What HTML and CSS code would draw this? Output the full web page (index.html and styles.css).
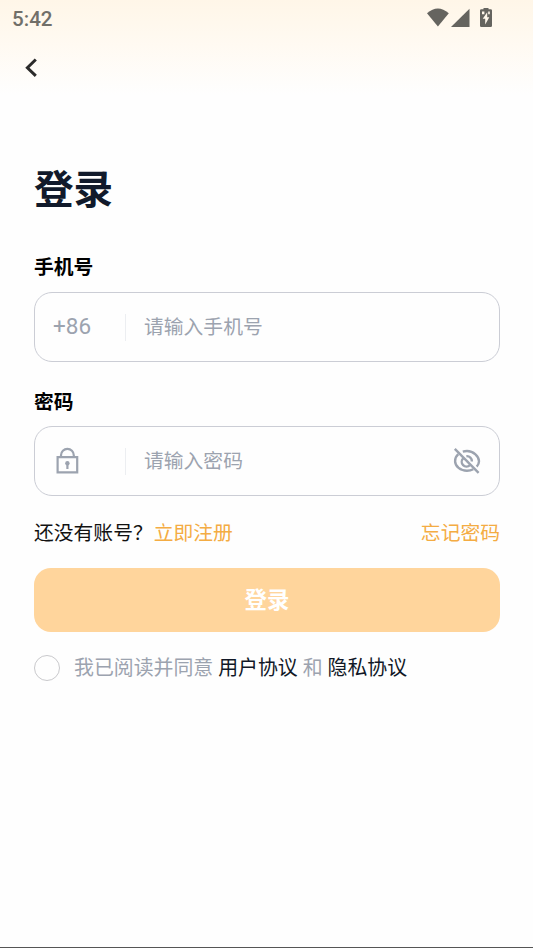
FILE: index.html
```html
<!DOCTYPE html>
<html lang="zh-CN">
<head>
<meta charset="utf-8">
<meta name="viewport" content="width=device-width, initial-scale=1">
<title>登录</title>
<link rel="stylesheet" href="styles.css">
</head>
<body>
<div class="screen">
  <div class="status">
    <span class="clock">5:42</span>
    <svg class="status-icons" width="68" height="22" viewBox="0 0 68 22" fill="#65645f">
      <path d="M1 5.3Q11.8-4.2 22.8 5.3L11.9 18.5Z"/>
      <path d="M43.5 0.8V19H25Z"/>
      <path fill-rule="evenodd" d="M57.5-.5h5v1.8h2.2q1.3 0 1.3 1.3v15.1q0 1.3-1.3 1.3h-9.4q-1.3 0-1.3-1.3V2.6q0-1.3 1.3-1.3h2.2ZM61.2 4.2L56.7 10.8h2.5v5.6L63.3 9.3h-2.1ZM56 3.5v2.7h2.4V3.5ZM62.2 3.5v2.7h1.6V3.5Z"/>
    </svg>
  </div>
  <div class="nav">
    <svg class="back" width="12" height="20" viewBox="0 0 12 20" fill="none" stroke="#2b2b2b" stroke-width="3"><path d="M10.8 1.5L2.4 9.7L10.8 17.9"/></svg>
  </div>
  <main class="form">
    <h1 class="title">登录</h1>
    <div class="label">手机号</div>
    <div class="field">
      <span class="prefix">+86</span>
      <span class="divider"></span>
      <span class="placeholder">请输入手机号</span>
    </div>
    <div class="label">密码</div>
    <div class="field">
      <span class="prefix icon">
        <svg class="lock" width="24" height="28" viewBox="0 0 24 28" fill="none" stroke="#9ca3af" stroke-width="2.2">
          <path d="M2.6 10.1H22.2V25.4H2.6Z"/>
          <path d="M6 10V8.2a6.4 6.4 0 0 1 12.8 0V10"/>
          <path d="M12.4 17v5"/>
          <circle cx="12.4" cy="16.3" r="2.2" fill="#9ca3af" stroke="none"/>
        </svg>
      </span>
      <span class="divider"></span>
      <span class="placeholder">请输入密码</span>
      <svg class="eye" width="28" height="28" viewBox="0 0 28 28" fill="none" stroke="#9ca3af" stroke-width="2.4">
        <path d="M9.8 4.6Q11.8 4 14 4C20.5 4 26 9.5 26 14.2Q26 17 23.7 19.6"/>
        <path d="M5.3 7.2C3 9.2 2.1 11.8 2.1 14.2C2.1 19.3 7.5 23.8 14 23.8Q17.4 23.8 20.3 22.3"/>
        <path d="M10.2 11.3A4.8 4.8 0 0 0 16.9 18.2"/>
        <path d="M13.4 9.2A5 5 0 0 1 18.9 14.5"/>
        <path d="M1.8 1.8L25.6 25.8"/>
      </svg>
    </div>
    <div class="links">
      <span>还没有账号？<a class="link register">立即注册</a></span>
      <a class="link">忘记密码</a>
    </div>
    <div class="submit">登录</div>
    <div class="agree">
      <span class="radio"></span>
      <span class="terms">我已阅读并同意 <a class="doc">用户协议</a> 和 <a class="doc">隐私协议</a></span>
    </div>
  </main>
  <div class="edge"></div>
</div>
</body>
</html>
```
FILE: styles.css
```css
* { box-sizing: border-box; }
body { margin: 0; font-family: Roboto, "Noto Sans CJK SC", sans-serif; }
.screen {
  display: flex;
  flex-direction: column;
  height: 948px;
  background: #fefefe linear-gradient(#fff6e8, #fffaf2 45px, #fefefe 95px) no-repeat;
}
.status {
  display: flex;
  justify-content: space-between;
  height: 38px;
  padding: 8px 39px 0 12px;
}
.clock { font-size: 20.6px; line-height: 22px; font-weight: 500; color: #716f69; }
.nav { height: 58px; padding: 20px 0 0 25px; }
.back { display: block; }
.form { flex: 1; padding: 66px 33px 0 34px; }
.title {
  height: 58px;
  margin: 0;
  font-size: 39.6px;
  line-height: 58px;
  font-weight: 700;
  color: #111a2b;
}
.label {
  height: 30px;
  margin: 33px 0 9px;
  font-size: 19.8px;
  line-height: 30px;
  font-weight: 700;
  color: #000;
}
.field {
  display: flex;
  align-items: center;
  height: 70px;
  padding: 0 18px;
  border: 1px solid #cbcdd5;
  border-radius: 18px;
}
.field + .label { margin: 26px 0 8px; }
.prefix {
  display: flex;
  width: 72px;
  font-size: 22.5px;
  line-height: 28px;
  padding-bottom: 2px;
  color: #9ca3af;
}
.prefix.icon { padding-bottom: 0; }
.lock { margin-left: 2px; }
.divider { width: 1px; height: 27px; margin-right: 18px; background: #eceef1; }
.placeholder { flex: 1; padding-top: 2px; font-size: 19.8px; line-height: 30px; color: #9ca3af; }
.eye { flex: none; }
.links {
  display: flex;
  justify-content: space-between;
  height: 30px;
  margin: 23px 0 19px;
  font-size: 19.8px;
  line-height: 30px;
  color: #111;
}
.link { color: #f4ac43; }
.register { margin-left: 1px; }
.submit {
  height: 64px;
  border-radius: 17px;
  background: #ffd59c;
  color: #fff;
  font-size: 22.4px;
  line-height: 64px;
  font-weight: 700;
  text-align: center;
}
.agree {
  display: flex;
  align-items: center;
  gap: 14px;
  height: 30px;
  margin-top: 21px;
  font-size: 19.9px;
  line-height: 30px;
  color: #9ca3af;
}
.radio { width: 26px; height: 26px; border: 1.5px solid #c9c9cc; border-radius: 50%; }
.terms { padding-top: 2px; }
.doc { color: #111827; }
.edge { height: 1px; background: #555; }
```
